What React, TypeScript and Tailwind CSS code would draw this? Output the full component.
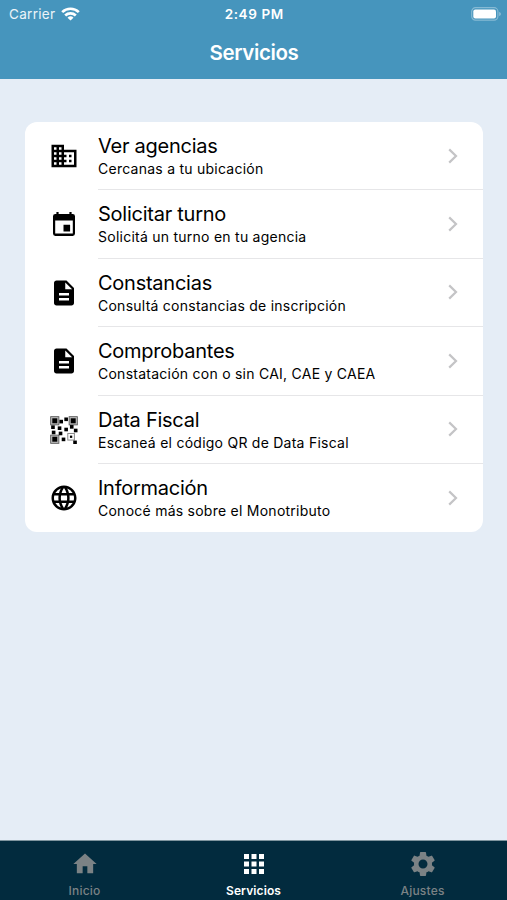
import React from 'react';
import { MdApps, MdBusiness, MdDescription, MdHome, MdLanguage, MdSettings } from 'react-icons/md';

const QR_DOTS = [
  [125, 78], [140, 71], [100, 95], [120, 98], [140, 102], [157, 94],
  [169, 105], [102, 111], [123, 114], [132, 132], [167, 141],
];

function QrIcon() {
  const corners = [[92, 62], [148, 62], [92, 118]];
  return (
    <svg className="size-7" viewBox="91 61 85 85">
      {corners.map(([x, y]) => (
        <g key={`${x}-${y}`}>
          <rect x={x + 1} y={y + 1} width="25" height="25" fill="#b5b5b5" stroke="#555" strokeWidth="2.5" />
          <rect x={x + 6} y={y + 6} width="15" height="15" fill="#000" />
        </g>
      ))}
      <rect x="145" y="114" width="20" height="20" fill="#fff" stroke="#888" strokeWidth="3" />
      <rect x="151.5" y="120.5" width="7" height="7" fill="#000" />
      {QR_DOTS.map(([x, y]) => (
        <rect key={`${x}-${y}`} x={x - 5.5} y={y - 5.5} width="11" height="11" fill="#000" />
      ))}
    </svg>
  );
}

function CalendarIcon() {
  return (
    <svg className="mb-px size-6" viewBox="0 0 24 24">
      <path
        fillRule="evenodd"
        d="M4.400 0h2.200v2h10.800V0h2.200v2h1.100A2.300 2.300 0 0 1 23 4.300v17.300a2.300 2.300 0 0 1-2.300 2.300H3.300A2.300 2.300 0 0 1 1 21.600v-17.300a2.300 2.300 0 0 1 2.300-2.300h1.100zM3.200 8.600v13h17.600v-13z"
      />
      <path d="M11.500 12.800h6.600v6.600h-6.600z" />
    </svg>
  );
}

function WifiIcon() {
  return (
    <svg className="h-[14px] w-[19px]" viewBox="0 0 19 14" fill="none" stroke="#fff" strokeWidth="2.7">
      <path d="M1.2 5.1a12 12 0 0 1 16.6 0" />
      <path d="M4.2 8.4a7.7 7.7 0 0 1 10.6 0" />
      <path d="M9.5 13.6 6.5 10.7a4.4 4.4 0 0 1 6 0z" fill="#fff" stroke="none" />
    </svg>
  );
}

function BatteryIcon() {
  return (
    <svg className="h-[14px] w-[30px]" viewBox="0 0 30 14">
      <rect x="0.7" y="0.7" width="26.2" height="12.4" rx="3.8" fill="none" stroke="#fff" strokeOpacity="0.35" strokeWidth="1.2" />
      <rect x="2.3" y="2.4" width="22.7" height="9.2" rx="2" fill="#fff" />
      <path d="M28.2 5v4c1-.3 1.6-1.1 1.6-2s-.6-1.700-1.600-2z" fill="#fff" fillOpacity="0.4" />
    </svg>
  );
}

const services = [
  { title: 'Ver agencias', desc: 'Cercanas a tu ubicación', icon: <MdBusiness size={30} /> },
  { title: 'Solicitar turno', desc: 'Solicitá un turno en tu agencia', icon: <CalendarIcon /> },
  { title: 'Constancias', desc: 'Consultá constancias de inscripción', icon: <MdDescription size={30} /> },
  { title: 'Comprobantes', desc: 'Constatación con o sin CAI, CAE y CAEA', icon: <MdDescription size={30} /> },
  { title: 'Data Fiscal', desc: 'Escaneá el código QR de Data Fiscal', icon: <QrIcon /> },
  { title: 'Información', desc: 'Conocé más sobre el Monotributo', icon: <MdLanguage size={30} /> },
];

const tabs = [
  { label: 'Inicio', icon: <MdHome size={28} />, active: false },
  { label: 'Servicios', icon: <MdApps size={30} />, active: true },
  { label: 'Ajustes', icon: <MdSettings size={30} />, active: false },
];

export default function App() {
  return (
    <div className="flex h-[900px] w-[507px] flex-col overflow-hidden bg-[#e5edf6] font-['Inter',sans-serif] text-black">
      <header className="h-[79px] shrink-0 bg-[#4695bd] text-white">
        {/* Status bar */}
        <div className="grid h-7 grid-cols-3 items-center pr-1.5 pl-[9px] text-[13.5px]">
          <div className="flex items-center gap-1.5">
            <span className="tracking-[0.3px] text-white/90">Carrier</span>
            <WifiIcon />
          </div>
          <span className="pr-[1.5px] text-center font-semibold tracking-[0.6px]">2:49 PM</span>
          <div className="flex justify-end">
            <BatteryIcon />
          </div>
        </div>
        <h1 className="pt-2.5 pl-px text-center text-[20.5px] leading-[30px] font-semibold tracking-[-0.4px]">Servicios</h1>
      </header>

      <main className="grow pt-[43px] pr-6 pl-[25px]">
        <ul className="overflow-hidden rounded-xl bg-white">
          {services.map((s, idx) => (
            <li key={s.title} className="flex h-[68.4px]">
              <div className="flex w-[73px] shrink-0 items-center justify-center pl-[5.5px]">{s.icon}</div>
              <div className={`flex grow items-center justify-between pr-[25px] ${idx < services.length - 1 ? 'border-b border-[#e6e6e8]' : ''}`}>
                <div className="pt-[1.5px]">
                  <p className="text-[20px] leading-[25px] tracking-[-0.25px] whitespace-nowrap">{s.title}</p>
                  <p className="text-[14px] leading-[20px] tracking-[0.25px] whitespace-nowrap">{s.desc}</p>
                </div>
                <svg className="h-4 w-2.5" viewBox="0 0 10 16" fill="none" stroke="#c4c4c6" strokeWidth="2.2">
                  <path d="M1.2 1.400 8 8l-6.800 6.600" />
                </svg>
              </div>
            </li>
          ))}
        </ul>
      </main>

      {/* Tab bar */}
      <nav className="grid h-[60px] shrink-0 grid-cols-3 border-t border-[#7f959f] bg-[#022b3e]">
        {tabs.map(t => (
          <div key={t.label} className={`flex flex-col items-center pt-[7px] ${t.active ? 'text-white' : 'text-[#7b8285]'}`}>
            <div className="flex h-[31px] items-center">{t.icon}</div>
            <span className={`mt-1 text-[12px] leading-4 ${t.active ? 'font-semibold tracking-[0.1px]' : 'font-medium tracking-[0.2px]'}`}>{t.label}</span>
          </div>
        ))}
      </nav>
    </div>
  );
}
